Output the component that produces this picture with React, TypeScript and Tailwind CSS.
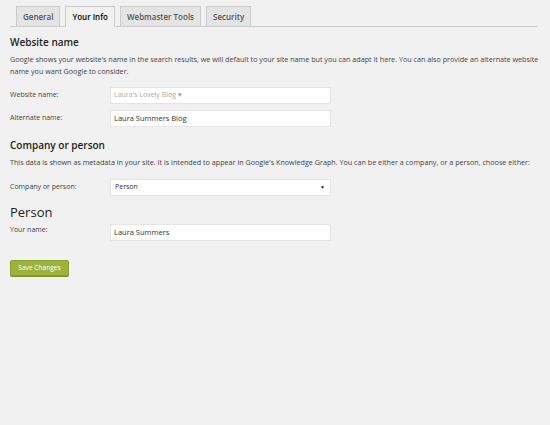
export default function App() {
    const tabs = ['General', 'Your Info', 'Webmaster Tools', 'Security'];
    return (
        <div className="w-[550px] h-[425px] bg-[#f1f1f1] text-[#444] overflow-hidden" style={{ fontFamily: '"Open Sans", sans-serif' }}>
            <div className="pl-[10px] pr-[13px] pt-[7px]">
                {/* tabs */}
                <div className="flex items-end gap-[5px] pl-[6px] border-b border-[#ccc] h-[20px]">
                    {tabs.map((t) => {
                        const active = t === 'Your Info';
                        return (
                            <div
                                key={t}
                                className={
                                    active
                                        ? 'h-[21px] -mb-px px-[6px] flex items-center border border-[#ccc] border-b-[#f1f1f1] bg-[#f1f1f1] text-[8px] font-semibold text-[#000]'
                                        : 'h-[20px] px-[6px] flex items-center border border-[#ccc] border-b-0 bg-[#e4e4e4] text-[8px] font-semibold text-[#555]'
                                }
                            >
                                {t}
                            </div>
                        );
                    })}
                </div>
            </div>

            <div className="px-[10px]">
                <h2 className="mt-[8px] text-[10px] font-semibold text-[#222] leading-[14px]">Website name</h2>
                <p className="mt-[4px] text-[7.2px] leading-[12px] text-[#444]">
                    Google shows your website's name in the search results, we will default to your site name but you can adapt it here. You can also provide an alternate website name you want Google to consider.
                </p>

                <div className="mt-[10px] flex items-center h-[17px]">
                    <label className="w-[100px] text-[7px] text-[#444]">Website name:</label>
                    <div className="w-[221px] h-[17px] bg-white border border-[#e5e5e5] flex items-center px-[3px] text-[7px] text-[#aaa]">Laura's Lovely Blog ♥</div>
                </div>
                <div className="mt-[6px] flex items-center h-[17px]">
                    <label className="w-[100px] text-[7px] text-[#444]">Alternate name:</label>
                    <div className="w-[221px] h-[17px] bg-white border border-[#e5e5e5] flex items-center px-[3px] text-[7.5px] text-[#333]">Laura Summers Blog</div>
                </div>

                <h2 className="mt-[11px] text-[10px] font-semibold text-[#222] leading-[14px]">Company or person</h2>
                <p className="mt-[4px] text-[7.2px] leading-[12px] text-[#444]">
                    This data is shown as metadata in your site. It is intended to appear in Google's Knowledge Graph. You can be either a company, or a person, choose either:
                </p>

                <div className="mt-[11px] flex items-center h-[17px]">
                    <label className="w-[100px] text-[7px] text-[#444]">Company or person:</label>
                    <div className="w-[221px] h-[17px] bg-white border border-[#e5e5e5] flex items-center justify-between pl-[4px] pr-[5px] text-[7px] text-[#333]">
                        <span>Person</span>
                        <span className="text-[5px] text-[#222]">▼</span>
                    </div>
                </div>

                <h2 className="mt-[7px] text-[13px] text-[#222] leading-[18px]">Person</h2>
                <div className="mt-[3px] flex items-start h-[17px]">
                    <label className="w-[100px] text-[7px] text-[#444] pt-[1px]">Your name:</label>
                    <div className="w-[221px] h-[17px] bg-white border border-[#e5e5e5] flex items-center px-[3px] text-[7.5px] text-[#333]">Laura Summers</div>
                </div>

                <button className="mt-[19px] w-[59px] h-[16px] rounded-[2px] bg-[#9fb33c] border border-[#8aa02c] text-white text-[6.6px] flex items-center justify-center shadow-[0_1px_0_#7d8f27]">
                    Save Changes
                </button>
            </div>
        </div>
    );
}
